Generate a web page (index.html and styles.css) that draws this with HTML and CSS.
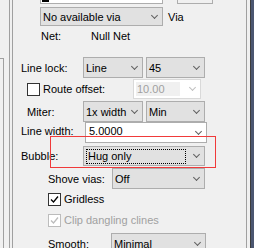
FILE: index.html
```html
<!DOCTYPE html>
<html lang="en">
<head>
    <meta charset="UTF-8">
    <title>Options</title>
    <link rel="stylesheet" href="styles.css">
</head>
<body>
    <div class="window">
        <!-- left splitter -->
        <div class="edge-left">
            <div class="stub"></div>
            <div class="groove"></div>
        </div>

        <!-- options panel -->
        <div class="panel">
            <div class="row r-top">
                <div class="top-edit"><span class="swatch"></span></div>
                <div class="top-btn"></div>
            </div>

            <div class="row r-via">
                <div class="combo combo-via">No available via<i class="chev"></i></div>
                <span class="lbl-via">Via</span>
            </div>

            <div class="row r-net">
                <span class="lbl-net">Net:</span>
                <span>Null Net</span>
            </div>

            <div class="row r-lock">
                <span class="lbl">Line lock:</span>
                <div class="combo c-a">Line<i class="chev"></i></div>
                <div class="combo c-b">45<i class="chev"></i></div>
            </div>

            <div class="row r-offset">
                <label class="check ind1 w-offset"><span class="box"></span>Route offset:</label>
                <div class="combo edit disabled c-off"><span class="field">10.00</span><i class="chev"></i></div>
            </div>

            <div class="row r-miter">
                <span class="lbl ind1">Miter:</span>
                <div class="combo c-a">1x width<i class="chev"></i></div>
                <div class="combo c-b">Min<i class="chev"></i></div>
            </div>

            <div class="row r-width">
                <span class="lbl up">Line width:</span>
                <div class="combo edit c-wide"><span class="field up">5.0000</span><i class="chev"></i></div>
            </div>

            <div class="row r-bubble">
                <span class="lbl">Bubble:</span>
                <div class="combo focus c-full"><span class="focus-ring">Hug only</span><i class="chev"></i></div>
            </div>

            <div class="row r-shove">
                <span class="lbl ind2">Shove vias:</span>
                <div class="combo c-short">Off<i class="chev"></i></div>
            </div>

            <div class="row r-grid">
                <label class="check ind2">
                    <span class="box"><svg viewBox="0 0 11 11"><polyline points="2,5.5 4.5,8 9,2.5"/></svg></span>Gridless
                </label>
            </div>

            <div class="row r-clip">
                <label class="check ind2 dim">
                    <span class="box"><svg viewBox="0 0 11 11"><polyline points="2,5.5 4.5,8 9,2.5"/></svg></span>Clip dangling clines
                </label>
            </div>

            <div class="row r-smooth">
                <span class="lbl ind2">Smooth:</span>
                <div class="combo c-short2">Minimal<i class="chev"></i></div>
            </div>

            <!-- highlight drawn over the panel -->
            <div class="mark"></div>
        </div>

        <div class="edge-right"></div>
    </div>
</body>
</html>
```

FILE: styles.css
```css
*{
    margin: 0;
    padding: 0;
    box-sizing: border-box;
}

body{
    width: 254px;
    height: 248px;
    overflow: hidden;
    background-color: #F0F0F0;
    font: 11px "Liberation Sans", Arial, sans-serif;
    color: #000;
}

.window{
    display: flex;
    height: 248px;
}

/* left splitter */
.edge-left{
    width: 13px;
    display: flex;
}
.stub{
    width: 4px;
    margin-top: 58px;
    border-top: 1px solid #A0A0A0;
    border-right: 1px solid #A0A0A0;
}
.groove{
    margin-left: 5px;
    width: 4px;
    border-left: 1px solid #A0A0A0;
    border-right: 1px solid #A0A0A0;
}

/* options panel */
.panel{
    position: relative;
    width: 234px;
    border-right: 1px solid #A0A0A0;
    padding-left: 8px;
}

.edge-right{
    width: 7px;
    background: linear-gradient(to right, #F0F0F0 0 3px, #3C3C3C 3px 4px, #4B5670 4px);
}

.row{
    display: flex;
    align-items: center;
    flex-shrink: 0;
}

.r-top{ height: 4px; align-items: flex-start; }
.r-via{ margin-top: 3px; height: 19px; }
.r-net{ height: 20px; }
.r-lock{ margin-top: 11px; height: 21px; }
.r-offset{ margin-top: 1px; height: 20px; }
.r-miter{ margin-top: 2px; height: 21px; }
.r-width{ height: 21px; }
.r-bubble{ margin-top: 3px; height: 20px; }
.r-shove{ margin-top: 2px; height: 21px; }
.r-grid{ height: 20px; }
.r-clip{ margin-top: 1px; height: 20px; }
.r-smooth{ margin-top: 3px; height: 21px; }

/* first partly hidden row */
.top-edit{
    margin-left: 19px;
    width: 123px;
    height: 4px;
    background: #fff;
    border: 1px solid #ADADAD;
    border-top: none;
}
.swatch{
    display: block;
    margin-left: 1px;
    width: 7px;
    height: 2px;
    background: #000;
}
.top-btn{
    margin-left: 14px;
    width: 36px;
    height: 4px;
    border: 1px solid #ADADAD;
    border-top: none;
}

.lbl{ width: 62px; white-space: nowrap; }
.ind1{ margin-left: 6px; }
.lbl.ind1{ width: 56px; }
.ind2{ margin-left: 27px; }
.lbl.ind2{ width: 64px; }
.w-offset{ width: 106px; }
.up{ position: relative; top: -2px; }

.lbl-via{ margin-left: 5px; }
.lbl-net{ margin-left: 20px; width: 50px; }

/* combo boxes */
.combo{
    position: relative;
    height: 100%;
    display: flex;
    align-items: center;
    padding-left: 2px;
    background: #E1E1E1;
    border: 1px solid #ADADAD;
    white-space: nowrap;
    overflow: hidden;
}
.chev{
    position: absolute;
    right: 5px;
    top: 50%;
    width: 5px;
    height: 5px;
    margin-top: -4px;
    border-right: 1px solid #606060;
    border-bottom: 1px solid #606060;
    transform: rotate(45deg);
}

.combo-via{ margin-left: 19px; width: 123px; }
.c-a{ width: 60px; }
.c-b{ margin-left: 3px; width: 59px; }
.c-off{ width: 68px; }
.c-wide{ margin-left: 2px; width: 122px; }
.c-full{ width: 122px; }
.c-short{ width: 93px; }
.c-short2{ width: 95px; margin-left: -1px; }

/* editable combos */
.combo.edit{
    background: #fff;
    padding: 2px;
}
.field{
    display: flex;
    align-items: center;
    height: 100%;
    width: 100%;
    padding-left: 1px;
    margin-right: 18px;
}
.combo.disabled{
    border-color: #D9D9D9;
    color: #A0A0A0;
}
.combo.disabled .field{ background: #F0F0F0; }
.combo.disabled .chev{ border-color: #C0C0C0; }

.focus-ring{
    display: flex;
    align-items: center;
    height: 15px;
    width: 100px;
    border: 1px dotted #000;
    padding-left: 1px;
}

/* check boxes */
.check{
    display: flex;
    align-items: center;
    white-space: nowrap;
}
.box{
    width: 13px;
    height: 13px;
    margin-right: 3px;
    background: #fff;
    border: 1px solid #333;
}
.box svg{
    display: block;
    width: 11px;
    height: 11px;
    fill: none;
    stroke: #000;
    stroke-width: 1.3;
}
.dim{ color: #A0A0A0; }
.dim .box{ border-color: #BCBCBC; }
.dim .box svg{ stroke: #BCBCBC; }

/* red highlight frame */
.mark{
    position: absolute;
    left: 37px;
    top: 136px;
    width: 166px;
    height: 32px;
    border: 1px solid #F03A3A;
}
```
